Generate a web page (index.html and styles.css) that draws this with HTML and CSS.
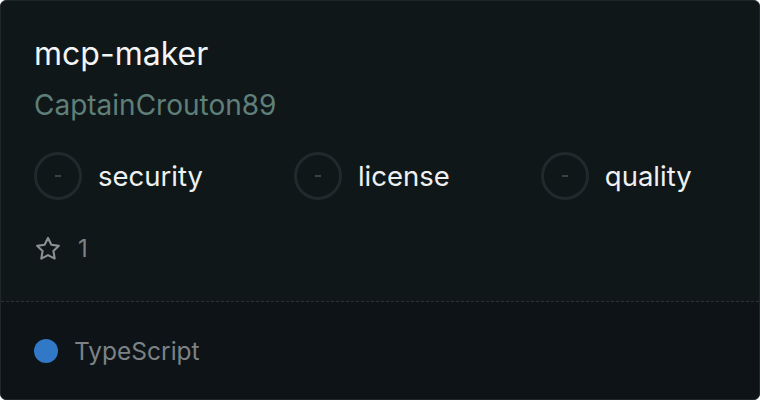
FILE: index.html
```html
<!DOCTYPE html>
<html lang="en">
<head>
    <meta charset="UTF-8">
    <meta name="viewport" content="width=device-width, initial-scale=1.0">
    <title>mcp-maker</title>
    <link rel="stylesheet" href="styles.css">
</head>
<body>
    <div class="card">
        <div class="card-main">
            <div class="repo-name">mcp-maker</div>
            <div class="repo-owner">CaptainCrouton89</div>
            <div class="scores">
                <div class="score">
                    <div class="score-ring"><span></span></div>
                    <div class="score-label">security</div>
                </div>
                <div class="score">
                    <div class="score-ring"><span></span></div>
                    <div class="score-label">license</div>
                </div>
                <div class="score">
                    <div class="score-ring"><span></span></div>
                    <div class="score-label">quality</div>
                </div>
            </div>
            <div class="stars">
                <svg width="28" height="28" viewBox="0 0 24 24" fill="none" stroke="currentColor" stroke-width="1.8" stroke-linejoin="round">
                    <path d="M12 2.5l2.9 5.9 6.4.9-4.65 4.5 1.1 6.4L12 17.2l-5.75 3 1.1-6.4L2.7 9.3l6.4-.9z"/>
                </svg>
                <span>1</span>
            </div>
        </div>
        <div class="card-footer">
            <span class="lang-dot"></span>
            <span class="lang-name">TypeScript</span>
        </div>
    </div>
</body>
</html>
```

FILE: styles.css
```css
body {
    margin: 0;
    background: #ffffff;
    font-family: Inter, "Noto Sans", sans-serif;
}

.card {
    width: 760px;
    height: 400px;
    box-sizing: border-box;
    border: 1px solid #1f272a;
    border-radius: 6px;
    background: #101719;
    overflow: hidden;
    display: flex;
    flex-direction: column;
}

.card-main {
    height: 301px;
    box-sizing: border-box;
    padding: 34px 33px 0;
    border-bottom: 1px dashed #2a3235;
}

.repo-name {
    font-size: 32px;
    line-height: 38px;
    color: #f2f4f5;
}

.repo-owner {
    margin-top: 15px;
    font-size: 28px;
    line-height: 34px;
    color: #5f7f79;
}

.scores {
    display: flex;
    gap: 91px;
    margin-top: 30px;
}

.score {
    display: flex;
    align-items: center;
    gap: 16px;
}

.score-ring {
    width: 48px;
    height: 48px;
    box-sizing: border-box;
    border: 3px solid #21292c;
    border-radius: 50%;
    display: flex;
    align-items: center;
    justify-content: center;
}

.score-ring span {
    width: 6px;
    height: 2px;
    background: #3a4245;
}

.score-label {
    font-size: 27.5px;
    color: #eef0f1;
}

.stars {
    display: flex;
    align-items: center;
    gap: 16px;
    margin-top: 34px;
    color: #8a9094;
}

.stars span {
    font-size: 24px;
    color: #7c8387;
}

.card-footer {
    flex: 1;
    background: #0d1316;
    display: flex;
    align-items: center;
    gap: 16px;
    padding: 0 33px;
}

.lang-dot {
    width: 24px;
    height: 24px;
    border-radius: 50%;
    background: #3178c6;
}

.lang-name {
    font-size: 24.5px;
    color: #7b8286;
}
```
